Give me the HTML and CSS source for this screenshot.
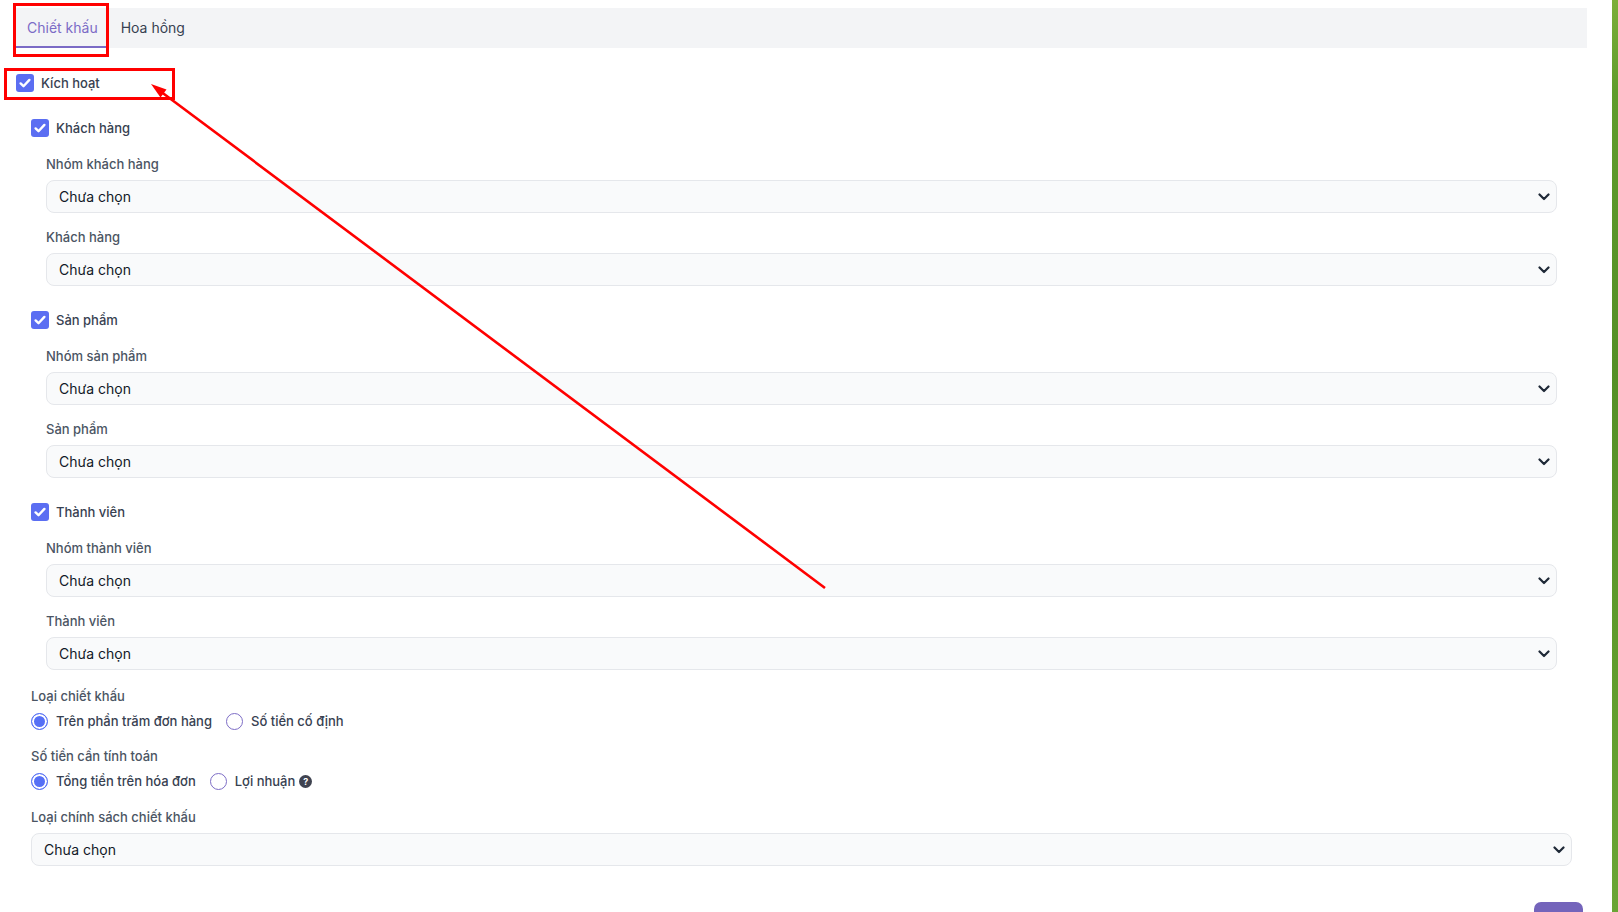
FILE: index.html
```html
<!DOCTYPE html>
<html lang="vi">
<head>
<meta charset="utf-8">
<title>Chiết khấu</title>
<link rel="stylesheet" href="styles.css">
</head>
<body>
<div class="screen">
  <main class="page">
    <nav class="tabs">
      <div class="tab active">Chiết khấu</div>
      <div class="tab">Hoa hồng</div>
    </nav>

    <form class="form">
      <label class="check-row">
        <span class="checkbox"><svg viewBox="0 0 18 18"><path d="M4.6 9.4l2.9 2.8 5.9-6.3"/></svg></span>
        <span class="check-text">Kích hoạt</span>
      </label>

      <div class="level">
        <section class="section">
          <label class="check-row">
            <span class="checkbox"><svg viewBox="0 0 18 18"><path d="M4.6 9.4l2.9 2.8 5.9-6.3"/></svg></span>
            <span class="check-text">Khách hàng</span>
          </label>
          <div class="groups">
            <div class="field">
              <div class="label">Nhóm khách hàng</div>
              <div class="select"><span>Chưa chọn</span><svg class="chev" viewBox="0 0 12 8"><path d="M1.5 1.5l4.5 4.5 4.5-4.5"/></svg></div>
            </div>
            <div class="field">
              <div class="label">Khách hàng</div>
              <div class="select"><span>Chưa chọn</span><svg class="chev" viewBox="0 0 12 8"><path d="M1.5 1.5l4.5 4.5 4.5-4.5"/></svg></div>
            </div>
          </div>
        </section>

        <section class="section">
          <label class="check-row">
            <span class="checkbox"><svg viewBox="0 0 18 18"><path d="M4.6 9.4l2.9 2.8 5.9-6.3"/></svg></span>
            <span class="check-text">Sản phẩm</span>
          </label>
          <div class="groups">
            <div class="field">
              <div class="label">Nhóm sản phẩm</div>
              <div class="select"><span>Chưa chọn</span><svg class="chev" viewBox="0 0 12 8"><path d="M1.5 1.5l4.5 4.5 4.5-4.5"/></svg></div>
            </div>
            <div class="field">
              <div class="label">Sản phẩm</div>
              <div class="select"><span>Chưa chọn</span><svg class="chev" viewBox="0 0 12 8"><path d="M1.5 1.5l4.5 4.5 4.5-4.5"/></svg></div>
            </div>
          </div>
        </section>

        <section class="section">
          <label class="check-row">
            <span class="checkbox"><svg viewBox="0 0 18 18"><path d="M4.6 9.4l2.9 2.8 5.9-6.3"/></svg></span>
            <span class="check-text">Thành viên</span>
          </label>
          <div class="groups">
            <div class="field">
              <div class="label">Nhóm thành viên</div>
              <div class="select"><span>Chưa chọn</span><svg class="chev" viewBox="0 0 12 8"><path d="M1.5 1.5l4.5 4.5 4.5-4.5"/></svg></div>
            </div>
            <div class="field">
              <div class="label">Thành viên</div>
              <div class="select"><span>Chưa chọn</span><svg class="chev" viewBox="0 0 12 8"><path d="M1.5 1.5l4.5 4.5 4.5-4.5"/></svg></div>
            </div>
          </div>
        </section>

        <div class="field radio-field first">
          <div class="label">Loại chiết khấu</div>
          <div class="radio-row">
            <span class="radio-item"><span class="radio on"></span><span class="radio-text">Trên phần trăm đơn hàng</span></span>
            <span class="radio-item"><span class="radio"></span><span class="radio-text">Số tiền cố định</span></span>
          </div>
        </div>

        <div class="field radio-field">
          <div class="label">Số tiền cần tính toán</div>
          <div class="radio-row">
            <span class="radio-item"><span class="radio on"></span><span class="radio-text">Tổng tiền trên hóa đơn</span></span>
            <span class="radio-item"><span class="radio"></span><span class="radio-text">Lợi nhuận</span><span class="help">?</span></span>
          </div>
        </div>

        <div class="field policy">
          <div class="label">Loại chính sách chiết khấu</div>
          <div class="select"><span>Chưa chọn</span><svg class="chev" viewBox="0 0 12 8"><path d="M1.5 1.5l4.5 4.5 4.5-4.5"/></svg></div>
        </div>
      </div>

      <div class="actions">
        <button type="button" class="btn">Lưu</button>
      </div>
    </form>
  </main>
  <div class="desktop-edge"></div>

  <div class="mark mark-tab"></div>
  <div class="mark mark-check"></div>
  <svg class="arrow" viewBox="0 0 1618 912" width="1618" height="912">
    <line x1="825" y1="588" x2="160" y2="91"/>
    <polygon points="151,84 166.5,89.5 160.5,97.5"/>
  </svg>
</div>
</body>
</html>
```

FILE: styles.css
```css
* { box-sizing: border-box; }

html, body {
  margin: 0;
  height: 100%;
  overflow: hidden;
  background: #ffffff;
}

body {
  font-family: Inter, "Noto Sans", "Liberation Sans", sans-serif;
  color: #111827;
}

.screen {
  position: relative;
  display: flex;
  height: 100vh;
  overflow: hidden;
}

.page {
  flex: 1;
  padding: 8px 25px 0 16px;
}

.desktop-edge {
  width: 6px;
  flex: none;
  background: linear-gradient(180deg, #7cae3a 0%, #5f9c2c 10%, #548f26 40%, #5e9b2c 70%, #6aa535 100%);
}

/* Tabs */
.tabs {
  display: flex;
  height: 40px;
  background: #f3f4f6;
}

.tab {
  display: flex;
  align-items: center;
  padding: 0 11px;
  margin-right: 1px;
  font-size: 14px;
  color: #374151;
  border-bottom: 2px solid transparent;
}

.tab.active {
  color: #7b6bc6;
  border-bottom-color: #7b6bc6;
}

/* Form */
.form {
  margin-top: 25px;
}

.check-row {
  display: flex;
  align-items: center;
  height: 20px;
  gap: 7px;
}

.checkbox {
  width: 18px;
  height: 18px;
  border-radius: 3px;
  background: #5b6ef2;
  display: flex;
  flex: none;
}

.checkbox svg {
  width: 18px;
  height: 18px;
  fill: none;
  stroke: #ffffff;
  stroke-width: 2.4;
  stroke-linecap: round;
  stroke-linejoin: round;
}

.check-text {
  font-size: 13px;
  font-weight: 500;
  color: #374151;
}

.level {
  padding: 0 15px;
  margin-top: 25px;
}

.section + .section {
  margin-top: 24px;
}

.groups {
  padding: 0 15px;
  margin-top: 16px;
  display: flex;
  flex-direction: column;
  gap: 14px;
}

.label {
  height: 20px;
  line-height: 20px;
  font-size: 13px;
  font-weight: 500;
  color: #4b5563;
}

.select {
  margin-top: 6px;
  height: 33px;
  border: 1px solid #e5e7eb;
  background: #f9fafb;
  border-radius: 8px;
  display: flex;
  align-items: center;
  justify-content: space-between;
  padding: 0 6px 0 12px;
  font-size: 14px;
  color: #111827;
}

.chev {
  width: 12px;
  height: 8px;
  fill: none;
  stroke: #1f2937;
  stroke-width: 2.2;
  stroke-linecap: round;
  stroke-linejoin: round;
}

/* Radios */
.radio-field.first {
  margin-top: 16px;
}

.radio-field + .radio-field {
  margin-top: 15px;
}

.radio-row {
  margin-top: 5px;
  height: 20px;
  display: flex;
  align-items: center;
  gap: 14px;
}

.radio-item {
  display: flex;
  align-items: center;
  gap: 8px;
}

.radio {
  width: 17px;
  height: 17px;
  border-radius: 50%;
  border: 1.5px solid #7d6dc6;
  background: #ffffff;
  flex: none;
}

.radio.on {
  border-color: #5670f5;
  background: #5670f5;
  box-shadow: inset 0 0 0 2px #ffffff;
}

.radio-text {
  font-size: 13px;
  font-weight: 500;
  color: #374151;
}

.help {
  width: 13px;
  height: 13px;
  border-radius: 50%;
  background: #3f4350;
  color: #ffffff;
  font-size: 9px;
  font-weight: 700;
  display: flex;
  align-items: center;
  justify-content: center;
  margin-left: -4px;
}

.field.policy {
  margin-top: 16px;
}

/* Actions */
.actions {
  display: flex;
  justify-content: flex-end;
  margin-top: 36px;
  padding-right: 4px;
}

.btn {
  width: 49px;
  height: 32px;
  border: none;
  border-radius: 7px;
  background: #7464bb;
  color: #ffffff;
  font-family: inherit;
  font-size: 13px;
}

/* Annotations */
.mark {
  position: absolute;
  border: 3px solid #ff0000;
  pointer-events: none;
}

.mark-tab {
  left: 13px;
  top: 3px;
  width: 96px;
  height: 54px;
}

.mark-check {
  left: 4px;
  top: 68px;
  width: 171px;
  height: 32px;
}

.arrow {
  position: absolute;
  left: 0;
  top: 0;
  pointer-events: none;
}

.arrow line {
  stroke: #ff0000;
  stroke-width: 2.6;
}

.arrow polygon {
  fill: #ff0000;
}
```
